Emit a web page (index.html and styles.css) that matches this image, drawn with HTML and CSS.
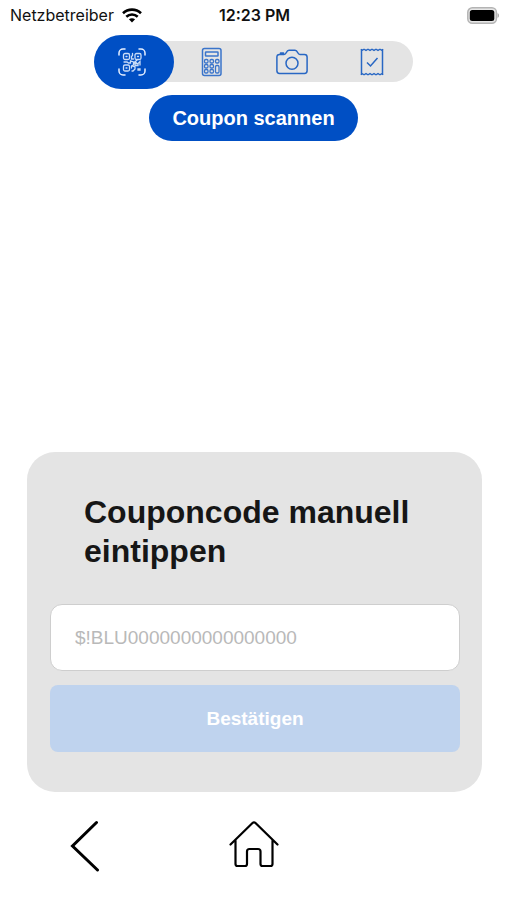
FILE: index.html
```html
<!DOCTYPE html>
<html lang="de">
<head>
<meta charset="utf-8">
<meta name="viewport" content="width=device-width, initial-scale=1">
<title>Coupon scannen</title>
<link rel="stylesheet" href="styles.css">
</head>
<body>
<div class="screen">
  <header class="status">
    <span class="carrier">Netzbetreiber
      <svg width="20" height="15" viewBox="0 0 20 15" aria-hidden="true"><g fill="none" stroke="#000" stroke-width="2.6"><path d="M1 5.2C6 .4 14 .4 19 5.2"/><path d="M4.3 8.7C7.5 5.7 12.500 5.700 15.700 8.700"/></g><path d="M10 14.500 6.900 11.300C8.700 9.800 11.300 9.800 13.100 11.300z"/></svg>
    </span>
    <span class="time">12:23 PM</span>
    <span class="battery"><svg width="33" height="17" viewBox="0 0 33 17" role="img" aria-label="Akku"><rect x="1.800" y=".8" width="28.600" height="15.400" rx="4.500" fill="#e6e6e6" stroke="#b4b4b4" stroke-width="1.500"/><rect x="3.800" y="3" width="24.500" height="11" rx="2.500"/><path d="M31.500 6c2 .8 2 4.200 0 5z" fill="#a9a9a9"/></svg></span>
  </header>

  <nav class="tabs" aria-label="Modus">
    <button class="tab active" type="button" aria-label="Code scannen">
      <svg width="28" height="28" viewBox="0 0 28 28" fill="none" stroke="#e8f1ff" stroke-width="1.500" stroke-linecap="round"><path d="M1 7V5a4 4 0 0 1 4-4h2M21 1h2a4 4 0 0 1 4 4v2M27 21v2a4 4 0 0 1-4 4h-2M7 27H5a4 4 0 0 1-4-4v-2"/><g stroke="#c9dcf7" stroke-width="1.300"><rect x="5.500" y="5.500" width="6" height="6" rx="1.500"/><rect x="17" y="5.500" width="6" height="6" rx="1.500"/><rect x="5.500" y="17" width="6" height="6" rx="1.500"/><path d="M8 8.500h1M19.500 8.500h1M8 20h1M14.500 5.500v2l-1 1v2.500h2M6 14h3l1.500 1h2v-2l3 1v3l-2 1v2M17 13.500l2 2h-2v2h3v-2l2-2v3.500M14 18l3 1v2l-2 2h-1M20 21h2v1h-2zM16 15l3-3"/></g></svg>
    </button>
    <button class="tab" type="button" aria-label="Code eintippen">
      <svg width="22" height="30" viewBox="0 0 22 30" fill="none" stroke="#3a74ca" stroke-width="1.500"><rect x="1.500" y="1.500" width="18.500" height="27" rx="2"/><rect x="4.500" y="5" width="12.500" height="4" rx=".5"/><g stroke-width="1.300"><rect x="3.500" y="12.500" width="3.500" height="3.500" rx="1.300"/><rect x="9" y="12.500" width="3.500" height="3.500" rx="1.300"/><rect x="14.500" y="12.500" width="3.500" height="3.500" rx="1.300"/><rect x="3.500" y="17.500" width="3.500" height="3.500" rx="1.300"/><rect x="9" y="17.500" width="3.500" height="3.500" rx="1.300"/><rect x="3.500" y="22.500" width="3.500" height="3.500" rx="1.300"/><rect x="9" y="22.500" width="3.500" height="3.500" rx="1.300"/><rect x="14.500" y="18.500" width="3.500" height="7.500" rx="1.300"/></g></svg>
    </button>
    <button class="tab" type="button" aria-label="Foto aufnehmen">
      <svg width="32" height="26" viewBox="0 0 32 26" fill="none" stroke="#2867c4" stroke-width="1.500" stroke-linejoin="round"><path d="M3.500 5.500H8c1.200 0 1.700-.6 2.200-1.700C11 2 11.600 1.200 13 1.200h6c1.400 0 2 .8 2.800 2.600.5 1.100 1 1.700 2.200 1.700h4.500a2.600 2.600 0 0 1 2.600 2.600v13.700a2.600 2.600 0 0 1-2.600 2.600h-25A2.600 2.600 0 0 1 .9 21.800V8.100a2.600 2.600 0 0 1 2.600-2.600z"/><path d="M4.500 5V4h3v1z"/><circle cx="16" cy="14.200" r="6"/></svg>
    </button>
    <button class="tab" type="button" aria-label="Belege">
      <svg width="24" height="28" viewBox="0 0 24 28" fill="none" stroke="#2867c4" stroke-width="1.500"><path d="M1.500 1v26M22.500 1v26"/><path stroke-width="1.300" d="M1 1.200l1.500 1 1.500-1 2 1.200 2-1.200 2 1.200 2-1.200 2 1.200 2-1.200 2 1.200 2-1.200 1.500 1 1.500-1M1 26.800l1.500-1 1.500 1 2-1.200 2 1.200 2-1.200 2 1.200 2-1.200 2 1.200 2-1.200 2 1.200 1.500-1 1.500 1"/><path d="M7 14.500l3.500 3.500 7-8"/></svg>
    </button>
  </nav>

  <button class="scan" type="button">Coupon scannen</button>

  <main class="content">
    <form class="card">
      <h1><label for="code">Couponcode manuell eintippen</label></h1>
      <input id="code" type="text" placeholder="$!BLU0000000000000000">
      <button class="confirm" type="button">Bestätigen</button>
    </form>
  </main>

  <footer class="bottom">
    <a href="#zurueck" aria-label="Zurück"><svg width="30" height="52" viewBox="0 0 30 52" fill="none" stroke="#000" stroke-width="3" stroke-linecap="round"><path d="M26.500 2.500 2.500 26l25 24"/></svg></a>
    <a href="#start" aria-label="Startseite"><svg width="50" height="52" viewBox="0 0 50 52" fill="none" stroke="#000" stroke-width="2.200" stroke-linecap="round" stroke-linejoin="round"><path d="M1.500 24.500 23.500 3q1.500-1.500 3 0l22 21.500M6.500 20.500V44q0 2 2 2H16q2 0 2-2V31.500q0-2.500 2.500-2.500h8.500q2.500 0 2.500 2.500V44q0 2 2 2h8q2 0 2-2V20.500"/></svg></a>
  </footer>
</div>
</body>
</html>
```
FILE: styles.css
```css
* { box-sizing: border-box; }

body {
  margin: 0;
  background: #fff;
  color: #161616;
  font-family: "Liberation Sans", Arial, sans-serif;
}

button, input { font: inherit; }

.screen {
  display: flex;
  flex-direction: column;
  min-height: 100vh;
}

.status {
  display: grid;
  grid-template-columns: 1fr auto 1fr;
  align-items: center;
  height: 30px;
  padding: 0 8px 0 10px;
  color: #111;
  font: 16px/20px Inter, sans-serif;
}

.carrier {
  display: flex;
  align-items: center;
  gap: 8px;
}

.time { font-weight: 600; }

.battery {
  display: flex;
  justify-content: flex-end;
}

.tabs {
  display: grid;
  grid-template-columns: repeat(4, 1fr);
  grid-template-rows: 100%;
  align-items: center;
  align-self: center;
  width: 63%;
  height: 41px;
  margin-top: 11px;
  border-radius: 21px;
  background: #e4e4e4;
}

.tab {
  display: flex;
  align-items: center;
  justify-content: center;
  height: 54px;
  padding: 0 3px 0 0;
  border: 0;
  border-radius: 27px;
  background: none;
}

.tab.active { background: #004fc4; }

.tab svg { flex: none; }

.scan {
  align-self: center;
  height: 46px;
  margin-top: 13px;
  padding: 0 23px;
  border: 0;
  border-radius: 23px;
  background: #004fc4;
  color: #fff;
  font-size: 20px;
  font-weight: 700;
}

.content {
  margin-top: auto;
  padding: 0 25px 0 27px;
}

.card {
  display: flex;
  flex-direction: column;
  padding: 41px 22px 40px 23px;
  border-radius: 28px;
  background: #e4e4e4;
}

h1 {
  margin: 0 34px 33px;
  font-size: 32px;
  line-height: 39px;
}

input {
  width: 100%;
  height: 67px;
  padding: 0 24px;
  border: 1px solid #cecece;
  border-radius: 12px;
  background: #fff;
  font-size: 19px;
}

input::placeholder {
  color: #b9b9b9;
  opacity: 1;
}

.confirm {
  height: 67px;
  margin-top: 14px;
  border: 0;
  border-radius: 8px;
  background: #bfd3ee;
  color: #fff;
  font-size: 19px;
  font-weight: 700;
}

.bottom {
  display: grid;
  grid-template-columns: repeat(3, 1fr);
  justify-items: center;
  height: 108px;
  padding-top: 28px;
}
```
